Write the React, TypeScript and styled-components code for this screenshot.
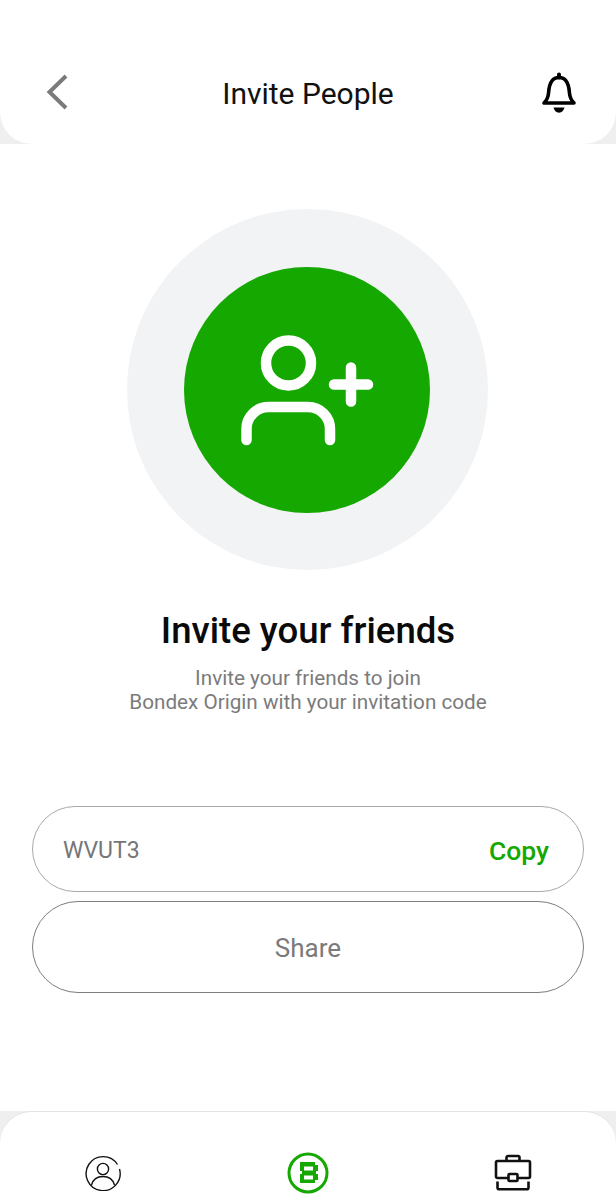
import styled, { createGlobalStyle } from 'styled-components';

const GlobalStyle = createGlobalStyle`
  html, body {
    margin: 0;
    padding: 0;
    background: #fff;
  }
  * {
    box-sizing: border-box;
  }
`;

const BackIcon = () => (
  <svg width="24" height="36" viewBox="0 0 24 36" fill="none">
    <path d="M20 2 3.500 18 20 34" stroke="#7a7a7a" strokeWidth="4" />
  </svg>
);

const BellIcon = () => (
  <svg width="40" height="44" viewBox="0 0 40 44" fill="none">
    <path d="M20 2.500v3" stroke="#000" strokeWidth="4" strokeLinecap="round" />
    <path
      d="M5 31h30c-2.800-2.800-4.300-6-4.600-10.500C29.800 11.500 26.500 5.500 20 5.500S10.200 11.500 9.600 20.500C9.300 25 7.800 28.200 5 31Z"
      stroke="#000"
      strokeWidth="3.600"
      strokeLinejoin="round"
    />
    <path d="M14.500 35.500h11c-.7 3-2.700 5.200-5.500 5.200s-4.800-2.200-5.500-5.200Z" fill="#000" />
  </svg>
);

const InviteIcon = () => (
  <svg width="134" height="112" viewBox="0 0 134 112" fill="none">
    <circle cx="48.500" cy="28" r="22.500" stroke="#fff" strokeWidth="10.500" />
    <path
      d="M6.500 105V94a22 22 0 0 1 22-22h39.500a22 22 0 0 1 22 22v11"
      stroke="#fff"
      strokeWidth="10.500"
      strokeLinecap="round"
    />
    <path
      d="M111 32.500v34M94 49.500h34"
      stroke="#fff"
      strokeWidth="10.500"
      strokeLinecap="round"
    />
  </svg>
);

const ProfileIcon = () => (
  <svg width="36" height="36" viewBox="0 0 36 36" fill="none">
    <path d="M32.500 9.500A17 17 0 1 0 34.500 14" stroke="#111" strokeWidth="1.400" />
    <circle cx="18" cy="14" r="5.600" stroke="#111" strokeWidth="1.400" />
    <path
      d="M6.500 30c1.500-5.500 6-8.500 11.500-8.500S28 24.500 29.500 30"
      stroke="#111"
      strokeWidth="1.400"
    />
  </svg>
);

const BrandIcon = () => (
  <svg width="42" height="42" viewBox="0 0 42 42" fill="none">
    <circle cx="21" cy="21" r="19" stroke="#14a800" strokeWidth="3" />
    <path
      d="M13 10h15v3h3v6h-2v3h2v6h-3v3H13v-9h2v-3h-2Z M17 14.500v4h9v-4Z M17 23.500v4h9v-4Z"
      fill="#14a800"
      fillRule="evenodd"
    />
  </svg>
);

const WalletIcon = () => (
  <svg width="38" height="38" viewBox="0 0 38 38" fill="none">
    <path
      d="M12.500 7V3.500c0-.8.700-1.500 1.500-1.500h10c.8 0 1.500.700 1.500 1.500V7"
      stroke="#111"
      strokeWidth="2.600"
    />
    <path
      d="M14 24H3.500c-.8 0-1.500-.700-1.500-1.500V8.500C2 7.700 2.700 7 3.500 7h31c.8 0 1.500.700 1.500 1.500v14c0 .8-.700 1.500-1.500 1.500H24"
      stroke="#111"
      strokeWidth="2.600"
    />
    <rect x="14.500" y="20" width="9" height="7" rx="1" stroke="#111" strokeWidth="2.600" />
    <path
      d="M3.500 27.500v6c0 1 .8 1.800 1.800 1.800h27.400c1 0 1.800-.8 1.800-1.800v-6"
      stroke="#111"
      strokeWidth="2.600"
    />
  </svg>
);

const App = () => (
  <Page>
    <GlobalStyle />

    <HeaderShell>
      <Header>
        <BackButton>
          <BackIcon />
        </BackButton>
        <HeaderTitle>Invite People</HeaderTitle>
        <BellButton>
          <BellIcon />
        </BellButton>
      </Header>
    </HeaderShell>

    <Content>
      <OuterCircle>
        <InnerCircle>
          <InviteIcon />
        </InnerCircle>
      </OuterCircle>

      <Title>Invite your friends</Title>
      <Subtitle>
        Invite your friends to join
        <br />
        Bondex Origin with your invitation code
      </Subtitle>

      <CodeField>
        <CodeText>WVUT3</CodeText>
        <CopyButton>Copy</CopyButton>
      </CodeField>
      <ShareButton>Share</ShareButton>
    </Content>

    <FooterShell>
      <Footer>
        <NavItem $offset={3}>
          <ProfileIcon />
        </NavItem>
        <NavItem $offset={0}>
          <BrandIcon />
        </NavItem>
        <NavItem $offset={2}>
          <WalletIcon />
        </NavItem>
      </Footer>
    </FooterShell>
  </Page>
);

const Page = styled.div`
  width: 616px;
  height: 1200px;
  display: flex;
  flex-direction: column;
  overflow: hidden;
  background: #fff;
  font-family: Roboto, 'Liberation Sans', sans-serif;
`;

const HeaderShell = styled.div`
  height: 144px;
  flex: none;
  background: #efefef;
`;

const Header = styled.header`
  height: 144px;
  padding: 72px 37px 0;
  display: grid;
  grid-template-columns: 1fr auto 1fr;
  align-items: start;
  background: #fff;
  border-radius: 0 0 32px 32px;
`;

const BackButton = styled.div`
  width: 24px;
  height: 44px;
  margin-left: 9px;
  padding-top: 2px;
`;

const HeaderTitle = styled.h1`
  margin: 3px 0 0;
  font-size: 30px;
  line-height: 38px;
  font-weight: 400;
  color: #111;
`;

const BellButton = styled.div`
  justify-self: end;
  width: 40px;
  height: 44px;
`;

const Content = styled.main`
  flex: 1;
  padding: 65px 32px 0;
  display: flex;
  flex-direction: column;
  align-items: center;
  background: #fff;
`;

const OuterCircle = styled.div`
  width: 361px;
  height: 361px;
  flex: none;
  margin-right: 2px;
  display: flex;
  align-items: center;
  justify-content: center;
  border-radius: 50%;
  background: #f2f3f5;
`;

const InnerCircle = styled.div`
  width: 246px;
  height: 246px;
  padding-top: 2px;
  display: flex;
  align-items: center;
  justify-content: center;
  border-radius: 50%;
  background: #14a800;
`;

const Title = styled.h2`
  margin: 39px 0 0;
  font-size: 36.600px;
  line-height: 44px;
  font-weight: 500;
  color: #0a0a0a;
`;

const Subtitle = styled.p`
  margin: 13px 0 0;
  font-size: 20.700px;
  line-height: 24px;
  text-align: center;
  color: #7b7b7b;
`;

const CodeField = styled.div`
  width: 552px;
  height: 86px;
  margin-top: 92px;
  padding: 0 34px 0 30px;
  display: flex;
  align-items: center;
  justify-content: space-between;
  border: 1px solid #a9a9a9;
  border-radius: 43px;
`;

const CodeText = styled.span`
  font-size: 23px;
  color: #767676;
  margin-top: 2px;
`;

const CopyButton = styled.span`
  font-size: 26.500px;
  font-weight: 500;
  color: #14a800;
  margin-top: 3px;
`;

const ShareButton = styled.div`
  width: 552px;
  height: 92px;
  margin-top: 9px;
  padding-top: 2px;
  display: flex;
  align-items: center;
  justify-content: center;
  border: 1px solid #7d7d7d;
  border-radius: 46px;
  font-size: 26px;
  color: #7a7a7a;
`;

const FooterShell = styled.div`
  height: 89px;
  flex: none;
  background: #efefef;
`;

const Footer = styled.nav`
  height: 89px;
  padding-top: 40px;
  display: grid;
  grid-template-columns: 1fr 1fr 1fr;
  justify-items: center;
  align-items: start;
  background: #fff;
  border-top: 1px solid #e3e3e3;
  border-radius: 32px 32px 0 0;
`;

const NavItem = styled.div<{ $offset: number }>`
  margin-top: ${(p) => p.$offset}px;
  line-height: 0;
`;

export default App;
